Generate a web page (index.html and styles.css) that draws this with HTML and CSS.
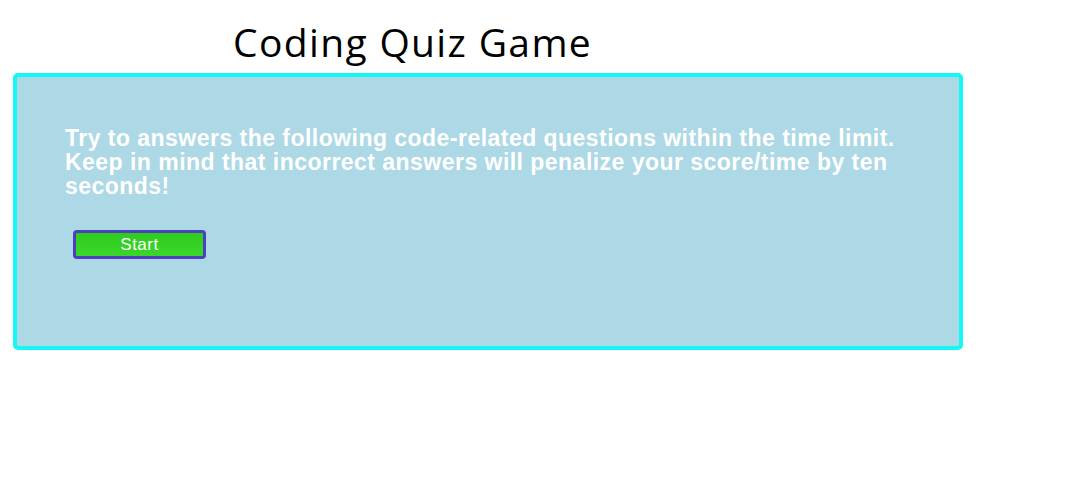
FILE: index.html
```html
<!DOCTYPE html>
<html>
<head>
<meta charset="utf-8">
<link rel="stylesheet" href="styles.css">
</head>
<body>
<header class="header">
  <h1 class="title">Coding Quiz Game</h1>
</header>
<main class="card">
  <p class="intro">Try to answers the following code-related questions within the time limit. Keep in mind that incorrect answers will penalize your score/time by ten seconds!</p>
  <button class="start-btn">Start</button>
</main>
</body>
</html>
```
FILE: styles.css
```css
html, body {
  margin: 0;
  padding: 0;
  background: #ffffff;
}
body {
  padding: 0 0 0 13px;
  font-family: "Liberation Sans", Arial, sans-serif;
}
.header {
  width: 950px;
  height: 73px;
  display: flex;
  align-items: flex-start;
  padding-left: 220px;
  box-sizing: border-box;
}
.title {
  margin: 17px 0 0 0;
  font-family: "Open Sans", "Noto Sans", sans-serif;
  font-weight: 400;
  font-size: 39px;
  letter-spacing: 1.35px;
  line-height: 50px;
  color: #000;
}
.card {
  width: 950px;
  height: 277px;
  box-sizing: border-box;
  background: #add8e6;
  border: 4px solid #14f7f7;
  border-radius: 5px;
  padding: 49px 40px 0 48px;
}
.intro {
  margin: 0;
  color: #ffffff;
  font-weight: 700;
  font-size: 23px;
  letter-spacing: 0.47px;
  line-height: 24px;
}
.start-btn {
  display: block;
  margin: 32px 0 0 8px;
  width: 133px;
  height: 29px;
  box-sizing: border-box;
  background: linear-gradient(#2fcc1f, #3ad62a);
  border: 3px solid #4d3fc0;
  border-radius: 4px;
  color: #ffffff;
  font-family: "Liberation Sans", Arial, sans-serif;
  font-size: 17px;
  letter-spacing: 0.5px;
  padding: 0;
  line-height: 22px;
}
```
